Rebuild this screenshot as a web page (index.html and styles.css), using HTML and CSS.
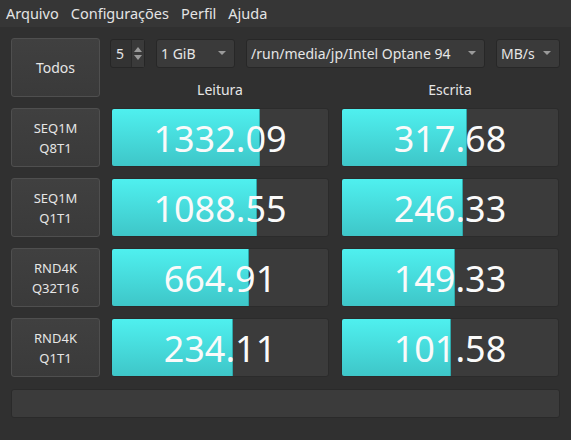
FILE: index.html
```html
<!DOCTYPE html>
<html lang="pt">
<head>
    <meta charset="UTF-8">
    <title>KDiskMark</title>
    <link rel="stylesheet" href="styles.css">
</head>
<body>
    <div class="menubar">
        <span class="menu-item">Arquivo</span>
        <span class="menu-item">Configurações</span>
        <span class="menu-item">Perfil</span>
        <span class="menu-item">Ajuda</span>
    </div>

    <div class="main">
        <div class="grid">
            <button class="btn btn-all">Todos</button>
            <div class="top">
                <div class="controls">
                    <div class="spin">
                        <span class="spin-val">5</span>
                        <span class="spin-arrows">
                            <svg width="8" height="5" viewBox="0 0 8 5"><path d="M0 5 L4 0 L8 5 Z" fill="#9a9a9a"/></svg>
                            <svg width="8" height="5" viewBox="0 0 8 5"><path d="M0 0 L4 5 L8 0 Z" fill="#9a9a9a"/></svg>
                        </span>
                    </div>
                    <div class="combo combo-size"><span>1 GiB</span><i class="caret"></i></div>
                    <div class="combo combo-path"><span>/run/media/jp/Intel Optane 94</span><i class="caret"></i></div>
                    <div class="combo combo-unit"><span>MB/s</span><i class="caret"></i></div>
                </div>
                <div class="heads">
                    <div class="head">Leitura</div>
                    <div class="head">Escrita</div>
                </div>
            </div>

            <button class="btn">SEQ1M<br>Q8T1</button>
            <div class="cell"><div class="fill" style="width:148px"></div><span>1332.09</span></div>
            <div class="cell write"><div class="fill" style="width:125px"></div><span>317.68</span></div>

            <button class="btn">SEQ1M<br>Q1T1</button>
            <div class="cell"><div class="fill" style="width:145px"></div><span>1088.55</span></div>
            <div class="cell write"><div class="fill" style="width:121px"></div><span>246.33</span></div>

            <button class="btn">RND4K<br>Q32T16</button>
            <div class="cell"><div class="fill" style="width:137px"></div><span>664.91</span></div>
            <div class="cell write"><div class="fill" style="width:113px"></div><span>149.33</span></div>

            <button class="btn">RND4K<br>Q1T1</button>
            <div class="cell"><div class="fill" style="width:121px"></div><span>234.11</span></div>
            <div class="cell write"><div class="fill" style="width:109px"></div><span>101.58</span></div>
        </div>
        <div class="comment"></div>
    </div>
</body>
</html>
```

FILE: styles.css
```css
*{
    margin: 0;
    padding: 0;
    box-sizing: border-box;
    font-family: "Noto Sans", "Open Sans", sans-serif;
}
body{
    background: #303030;
    color: #e6e6e6;
    width: 571px;
    height: 440px;
    overflow: hidden;
    font-size: 13px;
}
.menubar{
    height: 27px;
    background: #363636;
    display: flex;
    align-items: center;
    padding-bottom: 2px;
    font-size: 14.5px;
}
.menu-item{
    padding: 0 6px;
    color: #e4e4e4;
}
.main{
    padding: 11px 11px 0 11px;
}
.grid{
    display: grid;
    grid-template-columns: 89px 218px 219px;
    grid-auto-rows: 59px;
    column-gap: 11px;
    row-gap: 11px;
}
.write{
    margin-left: 1px;
}
.btn{
    background: linear-gradient(#404040, #3a3a3a);
    border: 1px solid #4f4f4f;
    border-radius: 3px;
    color: #e6e6e6;
    font-size: 13px;
    line-height: 20px;
    text-align: center;
}
.btn-all{
    font-size: 14px;
}
.top{
    grid-column: span 2;
    display: flex;
    flex-direction: column;
    margin-left: -1px;
}
.controls{
    display: flex;
    gap: 11px;
    height: 29px;
    margin-top: 1px;
    width: 450px;
}
.spin{
    width: 35px;
    display: flex;
    background: #333;
    border: 1px solid #262626;
    border-radius: 3px;
}
.spin-val{
    flex: 1;
    padding-left: 5px;
    line-height: 27px;
    font-size: 14px;
}
.spin-arrows{
    width: 13px;
    background: #3a3a3a;
    border-left: 1px solid #2a2a2a;
    display: flex;
    flex-direction: column;
    align-items: center;
    justify-content: center;
    gap: 3px;
}
.combo{
    display: flex;
    align-items: center;
    justify-content: space-between;
    background: #3a3a3a;
    border: 1px solid #272727;
    border-radius: 3px;
    padding: 0 8px 0 4px;
    font-size: 14px;
}
.combo-size{ width: 79px; }
.combo-path{ width: 239px; }
.combo-unit{ width: 64px; }
.caret{
    width: 0;
    height: 0;
    border-left: 4px solid transparent;
    border-right: 4px solid transparent;
    border-top: 4px solid #9a9a9a;
    margin-top: -2px;
}
.heads{
    flex: 1;
    display: flex;
    gap: 12px;
    margin-left: 1px;
}
.head{
    width: 218px;
    text-align: center;
    line-height: 40px;
    padding-top: 2px;
    font-size: 14px;
}
.cell{
    position: relative;
    background: #3b3b3b;
    border: 1px solid #2b2b2b;
    border-radius: 3px;
    overflow: hidden;
    display: flex;
    align-items: center;
    justify-content: center;
}
.fill{
    position: absolute;
    left: 0;
    top: 0;
    bottom: 0;
    background: linear-gradient(#4ff0ef, #3ec6c8);
    border-right: 1px solid #2fa8aa;
}
.cell span{
    position: relative;
    font-size: 36px;
    color: #fafafa;
    line-height: 1;
    margin-top: 2px;
}
.comment{
    margin-top: 12px;
    height: 29px;
    width: 549px;
    background: #3b3b3b;
    border: 1px solid #2a2a2a;
    border-radius: 3px;
}
```
